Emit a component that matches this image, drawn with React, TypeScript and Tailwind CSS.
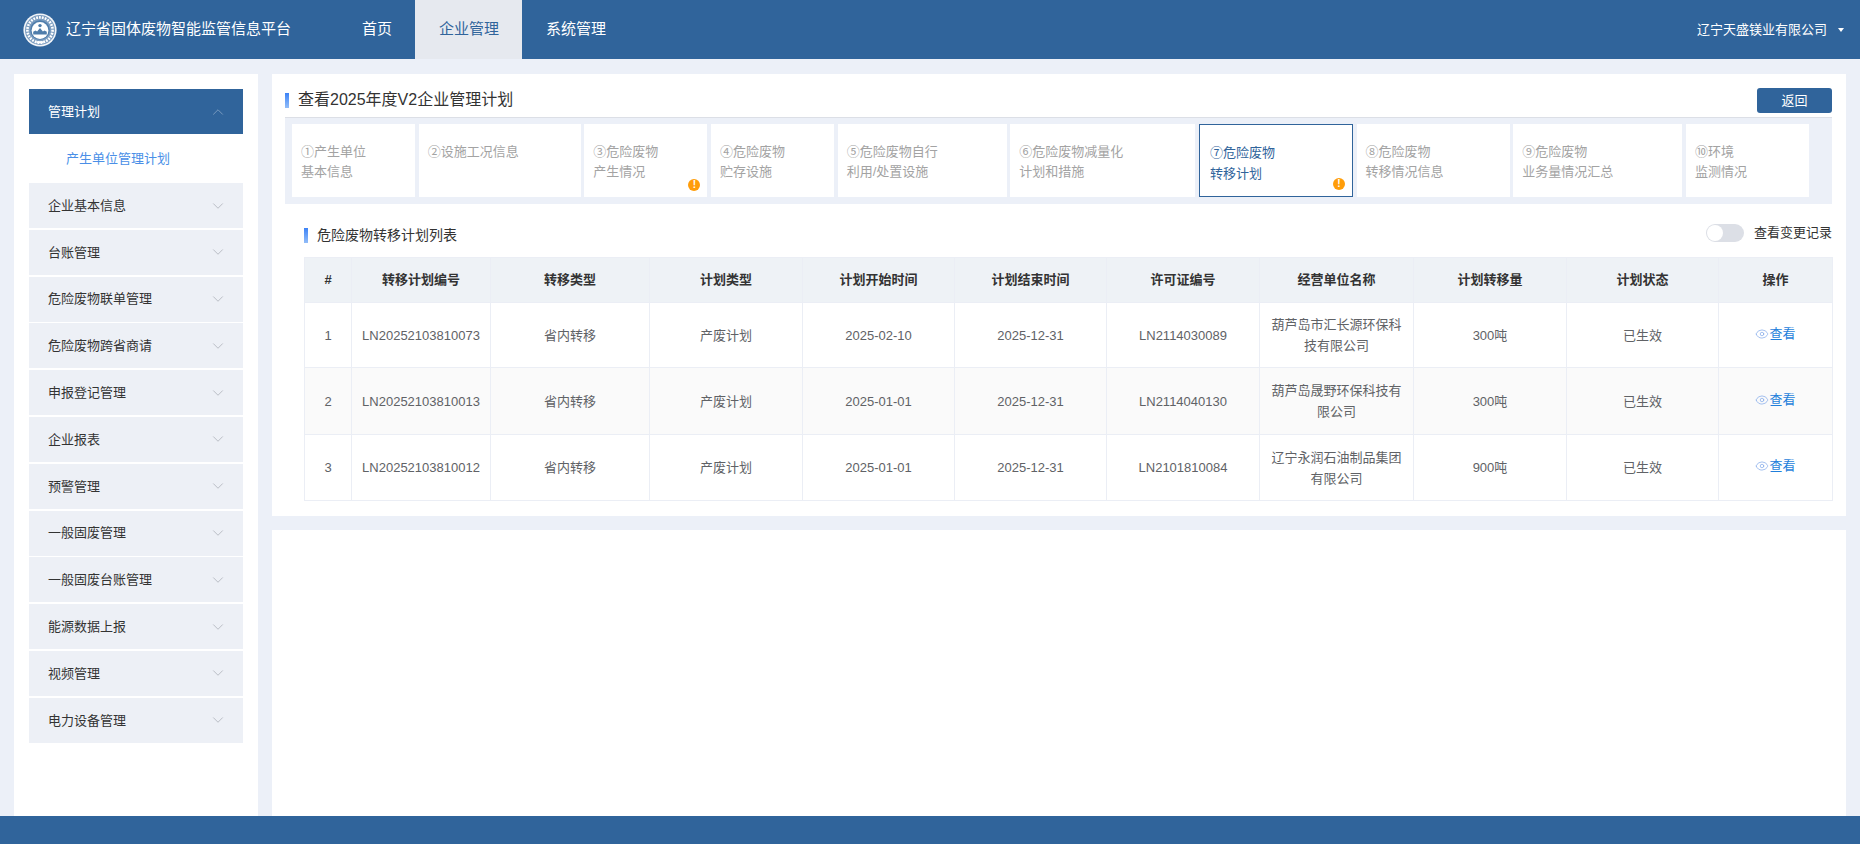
import { ChevronDown, ChevronUp, Eye } from 'lucide-react'

const menus = [
  '企业基本信息',
  '台账管理',
  '危险废物联单管理',
  '危险废物跨省商请',
  '申报登记管理',
  '企业报表',
  '预警管理',
  '一般固废管理',
  '一般固废台账管理',
  '能源数据上报',
  '视频管理',
  '电力设备管理',
]

const steps = [
  { lines: ['①产生单位', '基本信息'], w: 'w-[123px]' },
  { lines: ['②设施工况信息'], w: 'w-[162px]' },
  { lines: ['③危险废物', '产生情况'], w: 'w-[123px]', warn: true },
  { lines: ['④危险废物', '贮存设施'], w: 'w-[123px]' },
  { lines: ['⑤危险废物自行', '利用/处置设施'], w: 'w-[169px]' },
  { lines: ['⑥危险废物减量化', '计划和措施'], w: 'w-[185px]' },
  { lines: ['⑦危险废物', '转移计划'], w: 'w-[154px]', warn: true, active: true },
  { lines: ['⑧危险废物', '转移情况信息'], w: 'w-[153px]' },
  { lines: ['⑨危险废物', '业务量情况汇总'], w: 'w-[169px]' },
  { lines: ['⑩环境', '监测情况'], w: 'w-[123px]' },
]

const columns = [
  { title: '#', w: 'w-[47px]' },
  { title: '转移计划编号', w: 'w-[139px]' },
  { title: '转移类型', w: 'w-[159px]' },
  { title: '计划类型', w: 'w-[153px]' },
  { title: '计划开始时间', w: 'w-[152px]' },
  { title: '计划结束时间', w: 'w-[152px]' },
  { title: '许可证编号', w: 'w-[153px]' },
  { title: '经营单位名称', w: 'w-[154px]' },
  { title: '计划转移量', w: 'w-[153px]' },
  { title: '计划状态', w: 'w-[152px]' },
  { title: '操作', w: 'w-[114px]' },
]

const rows = [
  ['1', 'LN20252103810073', '省内转移', '产废计划', '2025-02-10', '2025-12-31', 'LN2114030089', '葫芦岛市汇长源环保科技有限公司', '300吨', '已生效'],
  ['2', 'LN20252103810013', '省内转移', '产废计划', '2025-01-01', '2025-12-31', 'LN2114040130', '葫芦岛晟野环保科技有限公司', '300吨', '已生效'],
  ['3', 'LN20252103810012', '省内转移', '产废计划', '2025-01-01', '2025-12-31', 'LN2101810084', '辽宁永润石油制品集团有限公司', '900吨', '已生效'],
]

function Emblem() {
  return (
    <svg width="34" height="34" viewBox="0 0 34 34" className="shrink-0">
      <circle cx="17" cy="17" r="16.6" fill="#f2f5f9" />
      <circle cx="17" cy="17" r="15" fill="#7c9dc0" />
      <circle cx="17" cy="17" r="12.6" fill="none" stroke="#ffffff" strokeWidth="2.6" strokeDasharray="1.8 1.1" />
      <circle cx="17" cy="17" r="9.8" fill="#4f7dab" />
      <circle cx="17" cy="17.5" r="8.4" fill="#ffffff" />
      <path d="M10.2 21.6v-2.8l2.3-1.3 1.6 1 2.9-3.6 2.9 3.6 1.6-1 2.3 1.3v2.8z" fill="#4f7dab" />
      <circle cx="17" cy="12.6" r="1.7" fill="#4f7dab" />
      <rect x="13.5" y="28.2" width="7" height="2" fill="#ffffff" />
    </svg>
  )
}

function WarnDot({ className }: { className: string }) {
  return (
    <span className={`absolute flex h-[12px] w-[12px] items-center justify-center rounded-full bg-[#ff9d0a] text-[10px] font-bold leading-none text-white ${className}`}>
      !
    </span>
  )
}

function Marker({ className }: { className: string }) {
  return <span className={`block w-[4px] bg-gradient-to-b from-[#3b82f6] to-[#93bdf8] ${className}`} />
}

export default function App() {
  return (
    <div className="flex h-[844px] flex-col overflow-hidden bg-[#ecf0f8] font-['Liberation_Sans','Noto_Sans_CJK_SC',sans-serif] text-[13px]">
      {/* Header */}
      <header className="flex h-[59px] shrink-0 items-center bg-[#30649b] text-white">
        <div className="flex w-[338px] items-center pl-[23px]">
          <Emblem />
          <span className="ml-[9px] whitespace-nowrap text-[15px]">辽宁省固体废物智能监管信息平台</span>
        </div>
        <nav className="flex h-full text-[15px]">
          <a className="flex items-center pl-6 pr-[23px]">首页</a>
          <a className="flex items-center bg-[#e6e9ef] pl-6 pr-[23px] text-[#30649b]">企业管理</a>
          <a className="flex items-center px-6">系统管理</a>
        </nav>
        <div className="ml-auto flex items-center pr-[16px]">
          <span>辽宁天盛镁业有限公司</span>
          <span className="ml-[11px] mt-[1px] h-0 w-0 border-x-[3.5px] border-t-[4px] border-x-transparent border-t-white" />
        </div>
      </header>

      <div className="flex min-h-0 flex-1 gap-[14px] px-[14px] pt-[15px]">
        {/* Sidebar */}
        <aside className="w-[244px] shrink-0 bg-white px-[15px] pt-[15px]">
          <div className="flex h-[45px] items-center justify-between bg-[#30649b] pl-[19px] pr-[16px] text-white">
            <span>管理计划</span>
            <ChevronUp size={18} strokeWidth={1.2} className="text-[#7f9fc2]" />
          </div>
          <div className="flex h-[49px] items-center pl-[37px] text-[#4a8fe7]">产生单位管理计划</div>
          <ul className="flex flex-col gap-[1.8px]">
            {menus.map((m) => (
              <li key={m} className="flex h-[45px] items-center justify-between bg-[#edf0f6] pl-[19px] pr-[16px] text-[#333]">
                <span>{m}</span>
                <ChevronDown size={18} strokeWidth={1.2} className="text-[#b4b8c0]" />
              </li>
            ))}
          </ul>
        </aside>

        <main className="flex min-w-0 flex-1 flex-col gap-[14px]">
          <section className="h-[442px] shrink-0 bg-white pl-[13px] pr-[14px]">
            {/* Title */}
            <div className="flex h-[44px] items-end justify-between border-b border-[#dcdfe6] pb-[4px]">
              <div className="mb-[2px] flex items-center gap-[9px]">
                <Marker className="h-[15px]" />
                <h1 className="text-[16px] font-normal leading-[22px] text-[#333]">查看2025年度V2企业管理计划</h1>
              </div>
              <button className="h-[25px] w-[75px] rounded-[3px] bg-[#30649b] text-white">返回</button>
            </div>

            {/* Steps */}
            <div className="flex h-[86px] gap-[3.67px] bg-[#ecf0f8] pl-[7px] pt-[6px]">
              {steps.map((s) => (
                <div
                  key={s.lines[0]}
                  className={`relative h-[73px] shrink-0 bg-white ${s.w} ${
                    s.active
                      ? 'border border-[#30649b] pl-[10px] pt-[17px] leading-[21px] text-[#30649b]'
                      : 'pl-[9px] pt-[18px] leading-[20px] text-[#a3a3a3]'
                  }`}
                >
                  {s.lines.map((l) => (
                    <div key={l} className="whitespace-nowrap">{l}</div>
                  ))}
                  {s.warn && <WarnDot className="bottom-[6px] right-[7px]" />}
                </div>
              ))}
            </div>

            {/* List heading */}
            <div className="ml-[19px] mt-[20px] flex h-[33px] items-start justify-between">
              <div className="flex items-center gap-[9px] pt-[4px]">
                <Marker className="h-[15px]" />
                <span className="text-[14px] leading-[15px] text-[#333]">危险废物转移计划列表</span>
              </div>
              <div className="flex items-center gap-[10px]">
                <span className="flex h-[18px] w-[38px] items-center rounded-full bg-[#dcdfe6] pl-[1px]">
                  <span className="h-[16px] w-[16px] rounded-full bg-white" />
                </span>
                <span className="leading-[18px] text-[#333]">查看变更记录</span>
              </div>
            </div>

            {/* Table */}
            <div className="ml-[19px]">
              <table className="w-full table-fixed border-collapse text-center">
                <colgroup>
                  {columns.map((c) => (
                    <col key={c.title} className={c.w} />
                  ))}
                </colgroup>
                <thead>
                  <tr className="h-[45px] bg-[#eef2f6]">
                    {columns.map((c) => (
                      <th key={c.title} className="border border-[#ebeef5] font-bold text-[#333]">{c.title}</th>
                    ))}
                  </tr>
                </thead>
                <tbody className="text-[#606266]">
                  {rows.map((r, i) => (
                    <tr
                      key={r[0]}
                      className={i === 0 ? 'h-[65px] bg-white' : i === 1 ? 'h-[67px] bg-[#fafafa]' : 'h-[66px] bg-white'}
                    >
                      {r.map((v, j) => (
                        <td key={j} className="border border-[#ebeef5] px-[10px] leading-[21px]">{v}</td>
                      ))}
                      <td className="border border-[#ebeef5] text-[#1f7fdb]">
                        <span className="inline-flex items-center">
                          <Eye size={14} strokeWidth={1.2} className="text-[#7fa8ea]" />
                          查看
                        </span>
                      </td>
                    </tr>
                  ))}
                </tbody>
              </table>
            </div>
          </section>
          <section className="flex-1 bg-white" />
        </main>
      </div>

      <footer className="h-[28px] shrink-0 bg-[#30649b]" />
    </div>
  )
}
